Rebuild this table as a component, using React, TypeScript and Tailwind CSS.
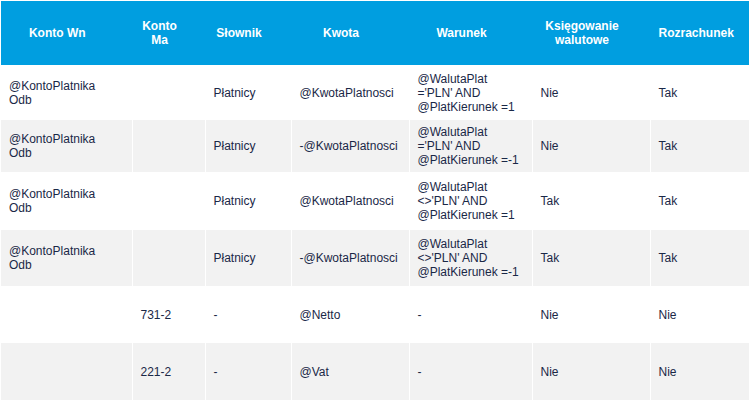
import React from "react";

const cols = [131, 73, 86, 118, 123, 118, 99];
const headers: React.ReactNode[] = [
  "Konto Wn",
  <>Konto<br />Ma</>,
  "Słownik",
  "Kwota",
  "Warunek",
  <>Księgowanie<br />walutowe</>,
  "Rozrachunek",
];

type Row = { h: number; cells: React.ReactNode[] };

const rows: Row[] = [
  { h: 55, cells: [<>@KontoPlatnika<br />Odb</>, "", "Płatnicy", "@KwotaPlatnosci", <>@WalutaPlat<br />='PLN' AND<br />@PlatKierunek =1</>, "Nie", "Tak"] },
  { h: 52, cells: [<>@KontoPlatnika<br />Odb</>, "", "Płatnicy", "-@KwotaPlatnosci", <>@WalutaPlat<br />='PLN' AND<br />@PlatKierunek =-1</>, "Nie", "Tak"] },
  { h: 58, cells: [<>@KontoPlatnika<br />Odb</>, "", "Płatnicy", "@KwotaPlatnosci", <>@WalutaPlat<br />&lt;&gt;'PLN' AND<br />@PlatKierunek =1</>, "Tak", "Tak"] },
  { h: 56, cells: [<>@KontoPlatnika<br />Odb</>, "", "Płatnicy", "-@KwotaPlatnosci", <>@WalutaPlat<br />&lt;&gt;'PLN' AND<br />@PlatKierunek =-1</>, "Tak", "Tak"] },
  { h: 57, cells: ["", "731-2", "-", "@Netto", "-", "Nie", "Nie"] },
  { h: 57, cells: ["", "221-2", "-", "@Vat", "-", "Nie", "Nie"] },
];

export default function App() {
  return (
    <div className="w-[751px] h-[400px] overflow-hidden bg-white pl-[1px] pt-[1px]" style={{ fontFamily: '"Liberation Sans", Arial, sans-serif' }}>
      <table className="table-fixed border-collapse w-[748px] text-[12px] leading-[14px]">
        <colgroup>
          {cols.map((w, i) => (
            <col key={i} style={{ width: w }} />
          ))}
        </colgroup>
        <thead>
          <tr className="h-[64px] bg-[#009ee0]">
            {headers.map((h, i) => (
              <th key={i} className="pl-[8px] pr-[26px] text-center align-middle font-bold text-white border-r border-[#009ee0] last:border-r-0">
                {h}
              </th>
            ))}
          </tr>
        </thead>
        <tbody>
          {rows.map((r, ri) => (
            <tr key={ri} className={ri % 2 === 1 ? "bg-[#f2f2f2]" : "bg-white"} style={{ height: r.h }}>
              {r.cells.map((c, ci) => (
                <td key={ci} className="px-2 align-middle text-left text-[#1a2847] border-r border-white last:border-r-0">
                  {c}
                </td>
              ))}
            </tr>
          ))}
        </tbody>
      </table>
    </div>
  );
}
